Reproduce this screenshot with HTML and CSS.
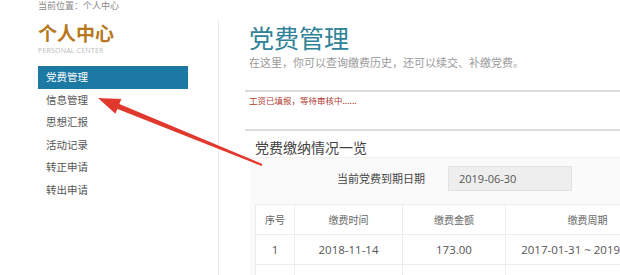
FILE: index.html
```html
<!DOCTYPE html>
<html lang="zh-CN">
<head>
    <meta charset="UTF-8">
    <title>党费管理</title>
    <link rel="stylesheet" href="styles.css">
</head>
<body>
    <div class="crumb">当前位置：个人中心</div>
    <div class="page">
        <div class="side">
            <div class="side-title">个人中心</div>
            <div class="side-sub">PERSONAL CENTER</div>
            <ul class="menu">
                <li class="active">党费管理</li>
                <li>信息管理</li>
                <li>思想汇报</li>
                <li>活动记录</li>
                <li>转正申请</li>
                <li>转出申请</li>
            </ul>
        </div>
        <div class="main">
            <h1 class="title">党费管理</h1>
            <p class="intro">在这里，你可以查询缴费历史，还可以续交、补缴党费。</p>
            <div class="notice">工资已填报，等待审核中......</div>
            <h2 class="sub-title">党费缴纳情况一览</h2>
            <div class="panel">
                <div class="due">
                    <span class="due-label">当前党费到期日期</span>
                    <span class="due-value">2019-06-30</span>
                </div>
                <table class="list">
                    <tr>
                        <th class="c1">序号</th>
                        <th class="c2">缴费时间</th>
                        <th class="c3">缴费金额</th>
                        <th class="c4">缴费周期</th>
                    </tr>
                    <tr>
                        <td>1</td>
                        <td>2018-11-14</td>
                        <td>173.00</td>
                        <td>2017-01-31 ~ 2019-06-30</td>
                    </tr>
                    <tr>
                        <td>2</td>
                        <td>2017-01-10</td>
                        <td>48.00</td>
                        <td>2016-01-31 ~ 2017-01-31</td>
                    </tr>
                </table>
            </div>
        </div>
    </div>

    <svg class="arrow" width="620" height="275" viewBox="0 0 620 275">
        <polygon points="98,98 115.4,113.7 121.4,98.9" fill="#e2392f"/>
        <polygon points="115,108 117,103 262.4,164 261.6,166" fill="#e2392f"/>
    </svg>
</body>
</html>
```

FILE: styles.css
```css
body {
    margin: 0;
    width: 620px;
    height: 275px;
    overflow: hidden;
    background: #fff;
    font-family: "Noto Sans CJK SC", "Open Sans", sans-serif;
    color: #555;
    position: relative;
}
.crumb {
    padding: 0 0 0 38px;
    height: 14px;
    line-height: 12px;
    font-size: 9px;
    color: #888;
}
.page {
    display: flex;
}
.side {
    flex: 0 0 219px;
    padding-left: 38px;
    margin-top: 6px;
    min-height: 260px;
    border-right: 1px solid #ebebeb;
    box-sizing: border-box;
}
.side-title {
    font-size: 19px;
    font-weight: bold;
    color: #b7771c;
    line-height: 26px;
}
.side-sub {
    font-family: "Open Sans", sans-serif;
    font-size: 7px;
    color: #bbb;
    line-height: 10px;
    letter-spacing: 0.2px;
}
.menu {
    list-style: none;
    margin: 10px 0 0;
    padding: 0;
}
.menu li {
    width: 150px;
    height: 22.5px;
    line-height: 22px;
    padding-left: 8px;
    box-sizing: border-box;
    font-size: 10.5px;
    color: #555;
}
.menu li.active {
    background: #1b79a3;
    color: #fff;
}
.main {
    flex: 1;
    min-width: 0;
    padding-left: 26px;
}
.title {
    margin: 6px 0 0 4px;
    font-size: 25px;
    font-weight: normal;
    color: #2f8298;
    line-height: 34px;
}
.intro {
    margin: 0 0 0 4px;
    font-size: 11px;
    color: #9a9a9a;
    line-height: 16px;
}
.notice {
    margin-top: 20px;
    border-top: 2px solid #dcdcdc;
    padding: 2px 0 0 4px;
    height: 35px;
    font-size: 8.5px;
    color: #b03a30;
    line-height: 12px;
}
.sub-title {
    margin: 0;
    border-top: 2px solid #dcdcdc;
    padding: 5px 0 0 10px;
    height: 28px;
    box-sizing: border-box;
    font-size: 14px;
    font-weight: normal;
    color: #444;
    line-height: 22px;
}
.panel {
    margin-left: 5px;
    width: 420px;
    background: #fafafa;
    border-top: 1px solid #f0f0f0;
    padding: 7px 0 0 5px;
}
.due {
    display: flex;
    align-items: center;
    height: 26px;
    padding-left: 82px;
}
.due-label {
    width: 111px;
    font-size: 11px;
    color: #444;
}
.due-value {
    width: 124px;
    height: 25px;
    box-sizing: border-box;
    background: #eee;
    border: 1px solid #e2e2e2;
    padding-left: 10px;
    line-height: 23px;
    font-family: "Open Sans", sans-serif;
    font-size: 11px;
    color: #555;
}
.list {
    margin-top: 13px;
    border-collapse: collapse;
    background: #fff;
    width: 410px;
    table-layout: fixed;
}
.list th, .list td {
    border: 1px solid #ececec;
    height: 29px;
    padding: 0;
    text-align: center;
    white-space: nowrap;
}
.list th {
    font-weight: normal;
    font-size: 10px;
    color: #666;
}
.list td {
    font-family: "Open Sans", sans-serif;
    font-size: 11.5px;
    color: #555;
}
.c1 { width: 38px; }
.c2 { width: 107px; }
.c3 { width: 102px; }
.c4 { width: 163px; }
.arrow {
    position: absolute;
    left: 0;
    top: 0;
}
```
